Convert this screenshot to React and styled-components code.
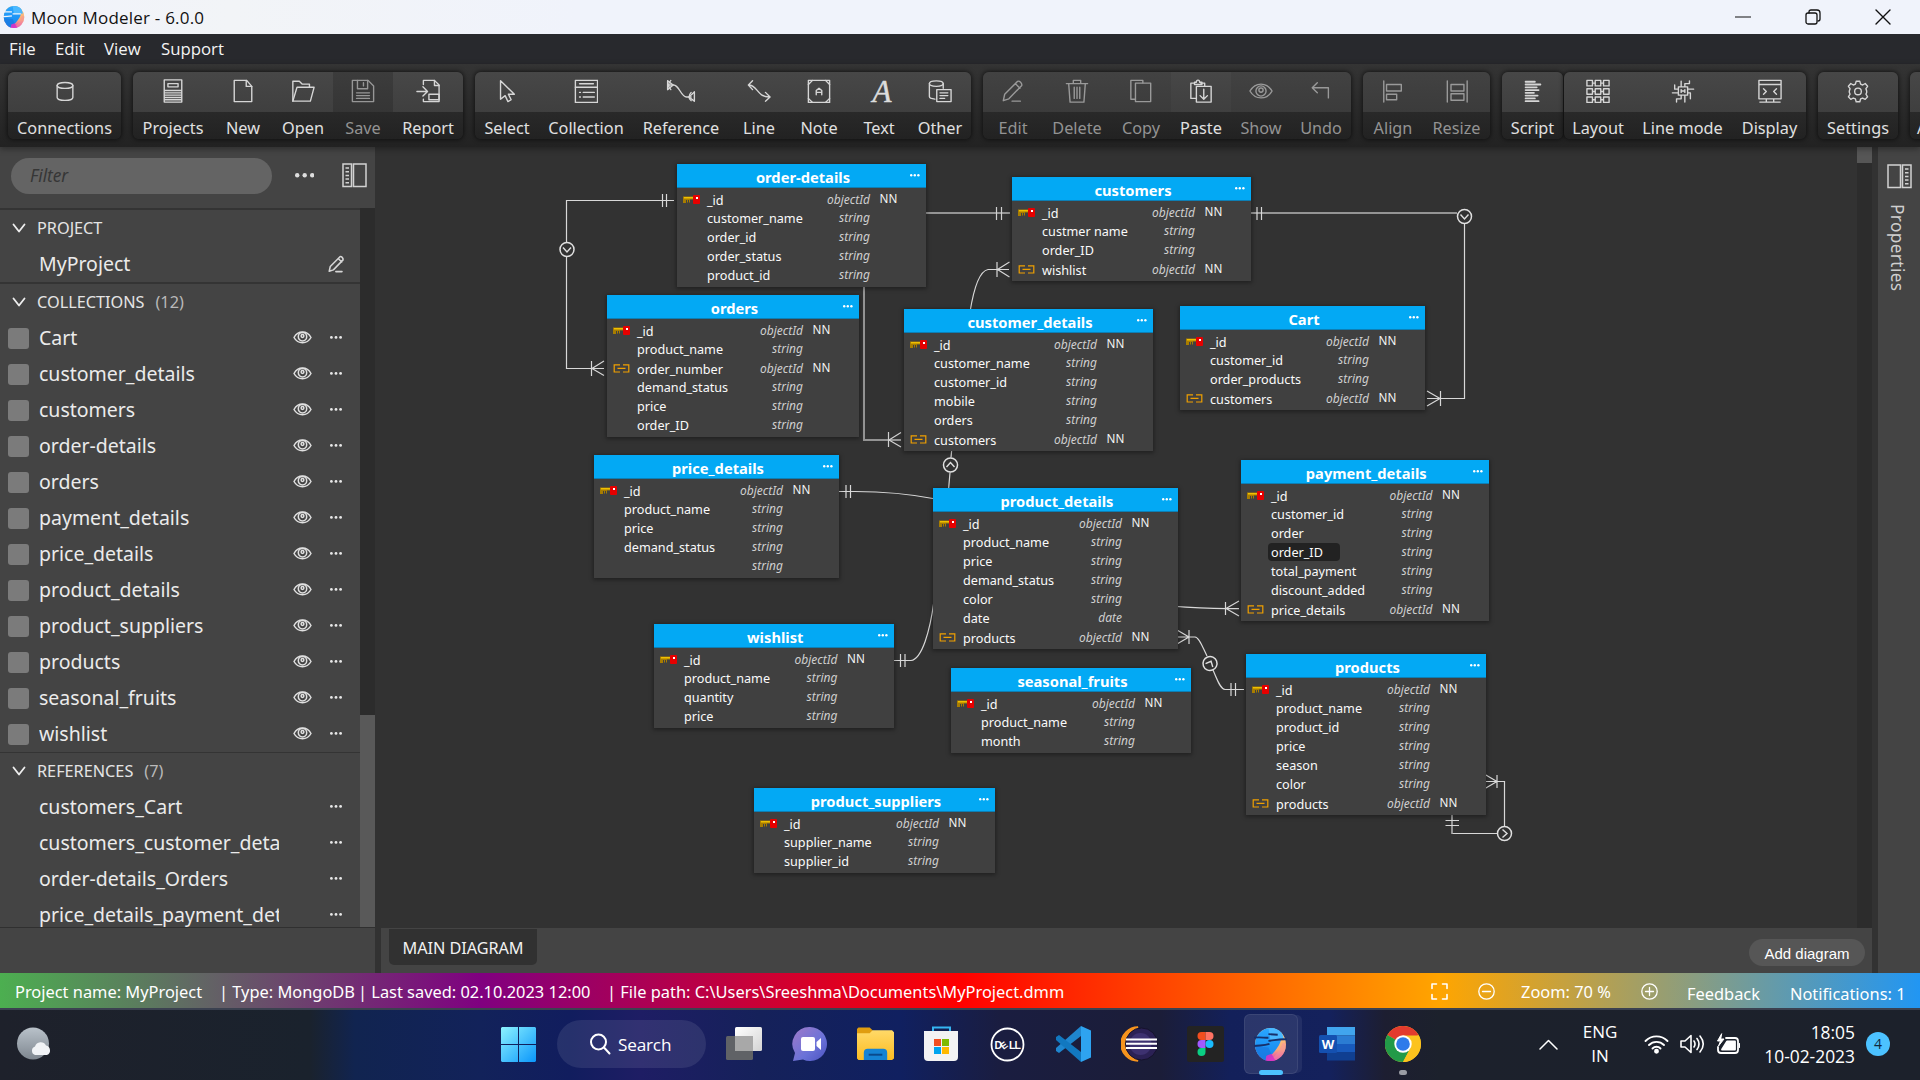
import React from "react";
import styled, { createGlobalStyle } from "styled-components";

const UI = `"Noto Sans", "Open Sans", sans-serif`;
const SYS = `"Open Sans", "Noto Sans", sans-serif`;

const Global = createGlobalStyle`
  * { box-sizing: border-box; }
  html, body { margin: 0; padding: 0; background: #323232; }
  body { overflow: hidden; font-family: ${UI}; font-size: 16.25px; color: #e4e4e4; }
  svg { display: block; flex: none; }
`;

const Screen = styled.div`
  width: 1920px;
  height: 1080px;
  display: flex;
  flex-direction: column;
  overflow: hidden;
`;

/* ---------- window chrome ---------- */

const TitleBar = styled.header`
  height: 34px;
  flex: none;
  display: flex;
  align-items: center;
  padding-left: 3px;
  background: linear-gradient(90deg, #f0f3fb, #f2f4f7 12%, #f0f3fb 30%);
  color: #111;
  font-family: ${SYS};
`;
const WindowTitle = styled.span`
  margin-left: 6px;
  font-size: 17px;
  letter-spacing: 0.2px;
  line-height: 35px;
`;
const WindowButtons = styled.div`
  margin-left: auto;
  display: flex;
  align-items: center;
  gap: 54px;
  padding-right: 29px;
`;

const MenuBar = styled.nav`
  height: 30px;
  flex: none;
  display: flex;
  align-items: center;
  gap: 19px;
  padding: 0 0 1px 9px;
  background: #28292d;
  color: #f4f4f4;
  font-family: ${SYS};
  font-size: 16.8px;
`;
const MenuItem = styled.span`
  width: ${(p) => p.$w}px;
  white-space: nowrap;
`;

/* ---------- toolbar ---------- */

const ToolBar = styled.div`
  height: 83px;
  flex: none;
  display: flex;
  align-items: flex-start;
  gap: 12px;
  padding: 8px 0 0 8px;
  overflow: hidden;
  background: linear-gradient(#343434, #222);
  box-shadow: 0 2px 6px rgba(0, 0, 0, 0.35);
  position: relative;
  z-index: 2;
`;
const ToolGroup = styled.div`
  height: 67px;
  display: flex;
  flex: none;
  border-radius: 6px;
  overflow: hidden;
  box-shadow: 0 0 4px 1px rgba(0, 0, 0, 0.55);
  margin-right: ${(p) => p.$pull || 0}px;
`;
const ToolButton = styled.button`
  width: ${(p) => p.$w}px;
  padding: 0;
  border: 0;
  background: none;
  display: flex;
  flex-direction: column;
  font: 16.25px ${UI};
  color: #dcdcdc;
`;
const ToolFace = styled.span`
  height: 40px;
  width: 100%;
  display: flex;
  align-items: center;
  justify-content: center;
  padding-bottom: 3px;
  background: ${(p) =>
    p.$tone === "dark"
      ? "linear-gradient(#3c3c3c, #353535)"
      : p.$tone === "dim"
      ? "linear-gradient(#424242, #3b3b3b)"
      : "linear-gradient(#474747, #3f3f3f)"};
  svg { opacity: ${(p) => (p.$off ? 0.6 : 1)}; }
`;
const ToolLabel = styled.span`
  height: 27px;
  width: 100%;
  line-height: 22px;
  padding-top: 5px;
  text-align: center;
  white-space: nowrap;
  background: linear-gradient(#292929, #222);
  color: ${(p) => (p.$off ? "#939393" : "#e0e0e0")};
`;

/* ---------- body ---------- */

const Body = styled.main`
  height: 826px;
  flex: none;
  display: flex;
`;
const SideBar = styled.aside`
  width: 375px;
  flex: none;
  display: flex;
  flex-direction: column;
  background: #444;
`;
const FilterBar = styled.div`
  height: 61px;
  flex: none;
  display: flex;
  align-items: center;
  padding: 0 8px 4px 11px;
`;
const FilterField = styled.div`
  width: 261px;
  height: 36px;
  border-radius: 18px;
  background: #646464;
  color: #363636;
  font-style: italic;
  font-size: 17.2px;
  line-height: 36px;
  padding-left: 19px;
  margin-right: 23px;
`;
const Spacer = styled.span`
  flex: 1;
`;
const TreeArea = styled.div`
  height: 720px;
  display: flex;
  overflow: hidden;
  border-bottom: 1px solid #303030;
`;
const Tree = styled.div`
  width: 360px;
  overflow: hidden;
`;
const TreeScroll = styled.div`
  width: 15px;
  background: #2c2c2c;
  padding-top: 507px;
`;
const TreeThumb = styled.div`
  height: 212px;
  background: #595959;
`;
const Section = styled.section`
  border-top: ${(p) => p.$line}px solid #343434;
`;
const SectionHead = styled.div`
  height: 36px;
  display: flex;
  align-items: center;
  padding: 0 0 1px 12px;
  gap: 11px;
  line-height: 36px;
`;
const Count = styled.span`
  color: #b9b9b9;
`;
const TreeRow = styled.div`
  height: 36px;
  display: flex;
  align-items: center;
  padding: 0 18px 0 8px;
`;
const Check = styled.span`
  width: 21px;
  height: 21px;
  border-radius: 3px;
  margin-right: 10px;
  background: ${(p) => (p.$hidden ? "transparent" : "#7b7b7b")};
`;
const RowName = styled.span`
  width: 240px;
  font-size: 19.5px;
  line-height: 36px;
  overflow: hidden;
  white-space: nowrap;
  color: #ebebeb;
`;
const RowTools = styled.span`
  flex: 1;
  display: flex;
  align-items: center;
  justify-content: flex-end;
  gap: 18px;
  padding-bottom: 1px;
  margin-right: ${(p) => p.$shift || 0}px;
`;

const Center = styled.div`
  width: 1497px;
  display: flex;
  flex-direction: column;
  background: #323232;
`;
const CanvasRow = styled.div`
  height: 781px;
  display: flex;
`;
const Canvas = styled.div`
  position: relative;
  width: 1482px;
  background: #323232;
`;
const CanvasScroll = styled.div`
  width: 15px;
  background: #2c2c2c;
`;
const CanvasThumb = styled.div`
  height: 16px;
  background: #565656;
`;
const TabBar = styled.div`
  height: 45px;
  margin-left: 6px;
  padding: 1px 7px 0 8px;
  display: flex;
  align-items: flex-start;
  justify-content: space-between;
  background: #444;
`;
const Tab = styled.div`
  width: 148px;
  height: 36px;
  border-radius: 0 0 5px 5px;
  background: #313131;
  color: #f2f2f2;
  text-align: center;
  line-height: 39px;
  letter-spacing: -0.05px;
`;
const AddButton = styled.button`
  width: 116px;
  height: 27px;
  margin-top: 10px;
  padding: 2px 0 0;
  border: 0;
  border-radius: 14px;
  background: #565656;
  color: #fff;
  font: 15px "Liberation Sans", Arial, sans-serif;
`;
const PropsPanel = styled.aside`
  width: 42px;
  margin-left: 6px;
  background: #444;
  display: flex;
  flex-direction: column;
  align-items: center;
  padding-top: 17px;
`;
const PropsLabel = styled.span`
  writing-mode: vertical-rl;
  margin: 15px 3px 0 0;
  font-size: 17.2px;
  letter-spacing: 0.4px;
  color: #cfcfcf;
`;

/* ---------- diagram ---------- */

const Links = styled.svg`
  position: absolute;
  left: 0;
  top: 0;
`;
const Table = styled.div`
  position: absolute;
  left: ${(p) => p.$x}px;
  top: ${(p) => p.$y}px;
  width: ${(p) => p.$w}px;
  padding-bottom: 3px;
  background: #404040;
  box-shadow: 0 1px 4px 1px rgba(0, 0, 0, 0.35);
`;
const TableHead = styled.div`
  height: 24px;
  margin-bottom: 1px;
  display: grid;
  grid-template-columns: 24px 1fr 21px;
  align-items: center;
  background: #03a9f4;
  border-bottom: 1px solid #0d7fb5;
  color: #fff;
`;
const TableTitle = styled.span`
  font-weight: 700;
  font-size: 14.7px;
  line-height: 20px;
  padding-top: 3px;
  text-align: center;
`;
const TableMenu = styled.span`
  justify-self: end;
  padding-right: 6px;
`;
const Field = styled.div`
  height: 19px;
  display: grid;
  grid-template-columns: 21px 1fr 60px 46px;
  align-items: center;
  padding-left: 6px;
  line-height: 19px;
`;
const FieldName = styled.span`
  font-size: 12.65px;
  width: ${(p) => (p.$on ? "72px" : "auto")};
  height: 18px;
  line-height: 18px;
  padding-left: 3px;
  border-radius: 4px;
  color: #fafafa;
  background: ${(p) => (p.$on ? "#222" : "transparent")};
`;
const FieldType = styled.span`
  font-size: 12px;
  font-style: italic;
  color: #cfcfcf;
  text-align: right;
  padding: 0 10px 1px 0;
`;
const FieldNN = styled.span`
  font-size: 11.7px;
  padding-bottom: 2px;
  margin-left: -0.5px;
  color: #f4f4f4;
`;

/* ---------- status bar ---------- */

const StatusBar = styled.footer`
  height: 35px;
  flex: none;
  display: flex;
  align-items: center;
  padding: 1px 16px 0 15px;
  background: linear-gradient(90deg, #4caf50 0%, purple 25%, red 50%, orange 75%, #2196f3 100%);
  color: #fff;
  font-size: 16.4px;
  white-space: nowrap;
`;
const StatusCell = styled.span`
  width: ${(p) => p.$w}px;
  padding-top: ${(p) => p.$drop || 0}px;
`;

/* ---------- taskbar ---------- */

const TaskBar = styled.footer`
  height: 72px;
  flex: none;
  display: flex;
  align-items: center;
  border-top: 2px solid #3b4150;
  padding-bottom: 2px;
  font-family: ${SYS};
  color: #fff;
  background: linear-gradient(90deg, #1e212b 0, #1a222d 310px, #112450 355px, #12225a 480px, #111d5e 570px,
    #1e1d64 640px, #15215a 760px, #102060 900px, #1a1d40 1000px, #1b1d38 1160px, #13205a 1230px, #14215c 1330px,
    #1d1e31 1385px, #1c212c 1440px, #1c212b 100%);
`;
const Weather = styled.div`
  width: 484px;
  padding-left: 16px;
`;
const Apps = styled.div`
  display: flex;
  align-items: center;
`;
const AppSlot = styled.div`
  width: ${(p) => p.$w || 66}px;
  height: 68px;
  display: flex;
  align-items: center;
  justify-content: center;
  position: relative;
`;
const SearchPill = styled.div`
  width: 149px;
  height: 48px;
  border-radius: 24px;
  margin: 0 3px 0 4px;
  display: flex;
  align-items: center;
  padding-left: 32px;
  gap: 7px;
  background: rgba(255, 255, 255, 0.09);
  font-size: 17.2px;
  letter-spacing: -0.2px;
`;
const ActiveTile = styled.div`
  width: 54px;
  height: 60px;
  border-radius: 6px;
  display: flex;
  align-items: center;
  justify-content: center;
  background: rgba(255, 255, 255, 0.1);
  border: 1px solid rgba(255, 255, 255, 0.08);
  box-shadow: 5px 0 0 -1px #232f66;
`;
const Marker = styled.span`
  position: absolute;
  bottom: 3px;
  left: 50%;
  width: ${(p) => p.$w}px;
  margin-left: ${(p) => -p.$w / 2}px;
  height: 5px;
  border-radius: 3px;
  background: ${(p) => p.$c};
`;
const Tray = styled.div`
  margin-left: auto;
  display: flex;
  align-items: center;
  gap: 11px;
  padding-right: 30px;
  font-size: 17px;
  line-height: 24px;
`;
const Lang = styled.div`
  width: 40px;
  margin: 0 13px 0 11px;
  text-align: center;
`;
const Clock = styled.div`
  width: 98px;
  margin-left: 5px;
  text-align: right;
  font-size: 17.4px;
`;
const Badge = styled.span`
  width: 24px;
  height: 24px;
  border-radius: 50%;
  background: #4cc2ff;
  color: #10283c;
  font-size: 14px;
  text-align: center;
`;

/* ---------- icons ---------- */

const Icon = ({ w = 26, h = 26, box = "0 0 26 26", sw = 1.5, c = "#d6d6d6", children }) => (
  <svg width={w} height={h} viewBox={box} fill="none" stroke={c} strokeWidth={sw} strokeLinejoin="round" strokeLinecap="round">
    {children}
  </svg>
);

const toolIcons = {
  Connections: <><ellipse cx="13" cy="7" rx="8.5" ry="3.2" /><path d="M4.500 7v13c0 1.800 3.800 3.200 8.500 3.200s8.500-1.400 8.500-3.200V7" /></>,
  Projects: <><rect x="3.500" y="1" width="19" height="24" /><rect x="7.500" y="5" width="11" height="3.500" /><path d="M4 12.500h18M4 15h18M4 17.500h18M4 20h18M4 22.500h18" /></>,
  New: <><path d="M3.500 1.500h13.500l5.500 6.500v16.500h-19z" /><path d="M16.500 1.500V8h6" /></>,
  Open: <><path d="M2 24V2.500h7l3 3h8V9" /><path d="M2 24L6.500 9H25l-4 15z" /></>,
  Save: <><path d="M1.500 1.500h17l6 6v17h-23z" /><path d="M7 1.500v9h11v-9M13.500 4v3.500M6 15h14M6 18h14M6 21h14" /></>,
  Report: <><path d="M8 6V1.500h12l5 5v18H8V22" /><path d="M20 1.500v5.500h5M1 13.500h11M7.500 8.500l5 5-5 5M14 16.500h11v6H14z" /></>,
  Select: <path d="M6 2v20l5-4 3 6.500 3.500-2-3-6H21z" />,
  Collection: <><rect x="1.500" y="1.500" width="24" height="24" /><path d="M1.500 9h24M6 5.200h15M6 14.500h1M10 14.500h12M6 19.500h1M10 19.500h12" /></>,
  Reference: <><path d="M-1.500 2v9.500M2 1.500c-3 3-3 7 0 10M-1 6.500h6c6 0 8 13 14 13h5M27.500 14v9.500M24 14.500c-3 3-3 7 0 9" /><path d="M-1.500 2l6 4.500-6 5M27.500 14l-6 5.500 6 4.500" /></>,
  Line: <><path d="M6 2L1.500 6.500 6 11.500M2 6.500c9 0 9 13 22 13M20 14.500l5 5-5 4.500" /></>,
  Note: <><rect x="1.500" y="1.500" width="23" height="24" /><path d="M1.500 6l4.500-4.500M20 1.500L24.500 6M1.500 21l4.500 4.500M20 25.500l4.500-4.500M10 17v-4.500l3-2.500 3 2.500V17M10 14.500h6" /></>,
  Other: <><ellipse cx="9" cy="5" rx="7.500" ry="3" /><path d="M1.500 5v14c0 1.500 2.500 2.500 6 2.800M16.500 5v5" /><path d="M9.500 11.500h15.500v13H9.500zM13 15h8.500M13 18h8.500M13 21h5" /></>,
  Edit: <><path d="M2.500 23.500l1.500-7L18 2.500c2-1 5 2 4.500 4.500L8.500 21.500zM15.500 5l5 5M12 24h9" /></>,
  Delete: <><path d="M1.500 5h23M9 5V1.500h8V5M4 5l1.500 20h15L22 5M10 9v12M13 9v12M16 9v12" /></>,
  Copy: <><path d="M7 22H2V1.500h13V4" /><rect x="7" y="4.500" width="16.500" height="20" /></>,
  Paste: <><path d="M7 21H2V4.500h4M13 4.500h4V8M6 6V3.500h2c0-3 3.500-3 3.500 0H14V6z" /><rect x="8" y="8" width="16" height="17" /><path d="M16 11v10.500M12 18l4 4 4-4" /></>,
  Show: <><path d="M1 13c6-10 18-10 24 0-6 10-18 10-24 0z" /><circle cx="13" cy="13" r="5.500" /><circle cx="13" cy="12" r="2.300" /></>,
  Undo: <path d="M9 4L3.500 9.500 9 15M3.500 9.500H21v11" />,
  Align: <><path d="M3 2v23M6 6h16v7H6zM6 16.500h11v6H6z" /></>,
  Resize: <><path d="M2.500 2v23M24 2v23M6.500 6h14v7h-14zM6.500 16h14v7h-14z" /></>,
  Script: <path strokeWidth="2" d="M5 3h10M5 6h16M5 9h12M5 12h14M5 15h9M5 18h13M5 21h10M5 24h14" />,
  Layout: <><path d="M1 1.500h6v6H1zM10 1.500h6v6h-6zM19 1.500h6v6h-6zM1 10.500h6v6H1zM10 10.500h6v6h-6zM19 10.500h6v6h-6zM1 19.500h6v6H1zM10 19.500h6v6h-6zM19 19.500h6v6h-6zM7 4.500h3M16 4.500h3M7 13.500h3M16 13.500h3M7 22.500h3M16 22.500h3" /></>,
  LineMode: <><path d="M8 8.500h10v9H8zM11 8.500V2.500M15 8.500V5h5V2M8 11H4V6.500M8 15H1.500M18 11h6.500M18 15h3v6.500M11 17.500v4H6v3.500M15 17.500v7.500M11 11.500v3M15 11.500v3M11 13h4" /></>,
  Display: <><path d="M1 1.500h24v20H1zM1 6h24M6 10.500l3 3-3 3M20 10.500l-3 3 3 3M9 21.500V25M17 21.500V25M2 25h22" /></>,
  Settings: <><path d="M11 2.500h4l.8 3 2.300 1 2.700-1.600 2.600 3-1.800 2.600.8 2.500 0 1.500-.8 2 1.800 2.800-2.600 2.800-2.800-1.500-2.200 1-.8 3h-4l-.8-3-2.300-1-2.700 1.500-2.600-2.800 1.800-2.800-.9-2.300.1-1.200.8-2.500-1.800-2.600 2.600-3 2.700 1.600 2.300-1z" /><circle cx="13" cy="13.500" r="3.600" /></>,
};

const Dots = ({ r = 1.4, gap = 4.6, c = "#e8e8e8" }) => {
  const w = gap * 2 + r * 2;
  return (
    <svg width={w} height={r * 2} fill={c}>
      {[0, 1, 2].map((i) => <circle key={i} cx={r + i * gap} cy={r} r={r} />)}
    </svg>
  );
};
const Chevron = () => (
  <Icon w={14} h={10} box="0 0 14 10" sw={1.8} c="#eee"><path d="M1.500 1.500L7 8.500l5.500-7" /></Icon>
);
const Eye = () => (
  <Icon w={19} h={13} box="0 0 19 13" sw={1.5} c="#e0e0e0">
    <path d="M1 6.500C5-.8 14-.8 18 6.500 14 13.500 5 13.500 1 6.500z" />
    <circle cx="9.500" cy="5.800" r="4.200" /><circle cx="9.500" cy="5" r="1.400" />
  </Icon>
);
const PanelIcon = ({ flip }) => (
  <svg width="25" height="25" viewBox="0 0 25 25" fill="none" stroke="#d2d2d2" strokeWidth="1.500" transform={flip ? "scale(-1 1)" : undefined}>
    <path d="M1 1h8.500v22.500H1zM11.500 1H24v22.500H11.500z" />
    <path d="M3.500 5h3.500M3.500 8.700h3.500M3.500 12.400h3.500M3.500 16h3.500M3.500 19.700h3.500" />
  </svg>
);
const KeyIcon = () => (
  <svg width="17" height="10" viewBox="0 0 17 10">
    <path d="M0 1.500h11v3H7V7.500H6V5H5v2.500H4V5H3v3H0z" fill="#a87d00" />
    <path d="M1 2h10v1.500H1z" fill="#f0c000" />
    <rect x="10" y="0" width="7" height="9" rx="1" fill="#e60000" />
    <rect x="13" y="2" width="2" height="2" fill="#fff" />
  </svg>
);
const LinkIcon = () => (
  <svg width="17" height="9" viewBox="0 0 17 9" fill="none" stroke="#f0a000" strokeWidth="1.200">
    <path d="M7 .8H1.200v7.200H7M10 .8h5.800v7.200H10M4.500 4.400h8" />
  </svg>
);

const MoonLogo = ({ s }) => (
  <svg width={s} height={s} viewBox="0 0 32 32">
    <defs>
      <linearGradient id="mlA" x1="0" y1="0" x2="0" y2="1"><stop offset="0" stopColor="#2aa6ff" /><stop offset="1" stopColor="#1286ee" /></linearGradient>
      <linearGradient id="mlB" x1="0" y1="0" x2="0" y2="1"><stop offset="0" stopColor="#ffd27a" /><stop offset=".65" stopColor="#f9a97a" /><stop offset="1" stopColor="#e236b8" /></linearGradient>
      <clipPath id="mlC"><ellipse cx="16" cy="16" rx="15" ry="16" /></clipPath>
    </defs>
    <g clipPath="url(#mlC)">
      <rect width="32" height="32" fill="url(#mlB)" />
      <path d="M0 0h25c4 9 1 17-10 28l-4 4H0z" fill="url(#mlA)" />
      <path d="M14 0h12l3 11-13 1z" fill="#4ab8ff" />
      <path d="M0 17l14 2 4 9-8 4H0z" fill="#1a78e0" opacity=".7" />
      <path d="M15 32c6-5 10-10 13-18l4 2-3 14z" fill="#f58fa0" opacity=".5" />
      <path d="M12 27l5-2 4 7h-10z" fill="#d633c8" opacity=".9" />
    </g>
    {s > 25 ? (
      <path d="M-1 9.500c6-1 10 0 15 0M14 12.500c6-.5 10-2 18-1.500M0 17.500c5-1 9 0 15-2M14 6l9 .5" stroke="#17306b" strokeWidth="1.800" fill="none" />
    ) : (
      <path d="M-1 8.500h14M14 11.500h12M-1 15.500c5-1 9 0 14-1" stroke="#f0f3fb" strokeWidth="1.900" fill="none" />
    )}
  </svg>
);

/* ---------- data ---------- */

const groups = [
  [["Connections", 113]],
  [["Projects", 80], ["New", 60], ["Open", 60], ["Save", 60, "dark", true], ["Report", 70]],
  [["Select", 64], ["Collection", 94], ["Reference", 96], ["Line", 60], ["Note", 60], ["Text", 60], ["Other", 62]],
  [["Edit", 60, "dim", true], ["Delete", 68, "dim", true], ["Copy", 60, "dim", true], ["Paste", 60], ["Show", 60, "dim", true], ["Undo", 60, "dim", true]],
  [["Align", 60, "dim", true], ["Resize", 67, "dim", true]],
  [["Script", 61]],
  [["Layout", 68], ["Line mode", 101], ["Display", 73]],
  [["Settings", 80]],
  [["Account", 76]],
];

const collections = ["Cart", "customer_details", "customers", "order-details", "orders", "payment_details", "price_details",
  "product_details", "product_suppliers", "products", "seasonal_fruits", "wishlist"];
const references = ["customers_Cart", "customers_customer_details", "order-details_Orders", "price_details_payment_details"];

const id = ["_id", "objectId", "key"];
const s = (n) => [n, "string"];
const ref = (n) => [n, "objectId", "link"];
const tables = [
  { t: "order-details", x: 677, y: 164, w: 249, f: [id, s("customer_name"), s("order_id"), s("order_status"), s("product_id")] },
  { t: "customers", x: 1012, y: 177, w: 239, f: [id, s("custmer name"), s("order_ID"), ref("wishlist")] },
  { t: "orders", x: 607, y: 295, w: 252, f: [id, s("product_name"), ref("order_number"), s("demand_status"), s("price"), s("order_ID")], tail: 69 },
  { t: "customer_details", x: 904, y: 309, w: 249, f: [id, s("customer_name"), s("customer_id"), s("mobile"), s("orders"), ref("customers")] },
  { t: "Cart", x: 1180, y: 306, w: 245, f: [id, s("customer_id"), s("order_products"), ref("customers")] },
  { t: "price_details", x: 594, y: 455, w: 245, f: [id, s("product_name"), s("price"), s("demand_status"), s("")] },
  { t: "product_details", x: 933, y: 488, w: 245, f: [id, s("product_name"), s("price"), s("demand_status"), s("color"), ["date", "date"], ref("products")] },
  { t: "payment_details", x: 1241, y: 460, w: 247.500, f: [id, s("customer_id"), s("order"), ["order_ID", "string", null, true], s("total_payment"), s("discount_added"), ref("price_details")] },
  { t: "wishlist", x: 654, y: 624, w: 239.500, f: [id, s("product_name"), s("quantity"), s("price")] },
  { t: "seasonal_fruits", x: 951, y: 668, w: 240, f: [id, s("product_name"), s("month")] },
  { t: "products", x: 1246, y: 654, w: 240, f: [id, s("product_name"), s("product_id"), s("price"), s("season"), s("color"), ref("products")] },
  { t: "product_suppliers", x: 754, y: 788, w: 241, f: [id, s("supplier_name"), s("supplier_id")] },
];

const OX = 375;
const OY = 147;

const linkPaths = [
  "M674 200.500H566.500V242M566.500 257V368.500H604M662.500 194v13M666.500 194v13M591.500 361v15M592 368.500l12-7.500M592 368.500l12 7",
  "M988 269.500H1009M997 262v15M997.500 269.500l12-7.500M997.500 269.500l12 7.500M988 269.500C980 271 974 287 970 312",
  "M951.700 450L951 457.500M950 472.500L948.500 490M934 601C930 631 922 659 911 660.500H893M900.500 654v13M905 654v13",
  "M1257 207v13M1261.500 207v13M1464.500 224V398.500H1427M1440.500 391v15M1440 398.500l-13-7.500M1440 398.500l-13 7.500",
  "M839 491.500H855C885 491.500 910 494 936 499M846 485v13M850.500 485v13M1176 606.500C1195 607.500 1210 608.700 1239 608.700M1225.500 602v13M1226 608.500l13-7.500M1226 608.500l13 7.500",
  "M1177 637H1195C1199 637 1203 648 1207 656M1213 670C1217 679 1220 689 1225 689.500H1244M1189 630v14M1189 637l-12-7M1189 637l-12 7M1231 683v13M1235.500 683v13",
  "M1486 781.500H1504.500V826M1497 833.500H1452.500M1497 775v13M1497 781.500l-12-7M1497 781.500l-12 7M1445.500 820.500h13.500M1445.500 825.500h13.500",
];
const softPaths = ["M926 213H1010", "M1251 213H1457", "M864 287V440H901", "M1452 814V834"];
const softMarks = "M996.500 207v13M1001.500 207v13M888.500 432v15M889 440l12-7.500M889 440l12 7";
const arrows = [[567, 249.500, 0], [950.500, 465, 180], [1464.500, 216.500, 0], [1210, 663.500, 205], [1504.500, 833.500, -90]];

/* ---------- taskbar drawings ---------- */

const StartIcon = () => (
  <svg width="35" height="35" viewBox="0 0 35 35">
    <defs><linearGradient id="st" x1="0" y1="0" x2="1" y2="1"><stop offset="0" stopColor="#8df3ff" /><stop offset="1" stopColor="#0a96fb" /></linearGradient></defs>
    <path d="M1 0h16v17H0V1zM18 0h16l1 1v16H18zM0 18h17v17H1l-1-1zM18 18h17v16l-1 1H18z" fill="url(#st)" />
  </svg>
);
const TaskViewIcon = () => (
  <svg width="36" height="36" viewBox="0 0 36 36">
    <defs><linearGradient id="tv" x1="0" y1="0" x2="1" y2="1"><stop offset="0" stopColor="#fff" /><stop offset="1" stopColor="#d4d4d4" /></linearGradient></defs>
    <rect x="0" y="10" width="27" height="24" rx="1.500" fill="#606266" />
    <rect x="9" y="1" width="27" height="24" rx="1.500" fill="url(#tv)" />
    <rect x="9" y="10" width="18" height="15" fill="#a8a8a8" />
  </svg>
);
const ChatIcon = () => (
  <svg width="36" height="36" viewBox="0 0 36 36">
    <defs><linearGradient id="ch" x1="0" y1="0" x2="1" y2="1"><stop offset="0" stopColor="#a07ac9" /><stop offset=".6" stopColor="#6a72d8" /><stop offset="1" stopColor="#4b52c0" /></linearGradient></defs>
    <path d="M18 1a17 17 0 1 1-7 32.500L1 35l2-8A17 17 0 0 1 18 1z" fill="url(#ch)" />
    <rect x="9" y="11" width="14" height="14" rx="2" fill="#fff" /><path d="M24.500 16l4.500-4v12l-4.500-4z" fill="#fff" />
  </svg>
);
const FolderIcon = () => (
  <svg width="37" height="34" viewBox="0 0 38 34">
    <defs><linearGradient id="fo" x1="0" y1="0" x2="0" y2="1"><stop offset="0" stopColor="#ffd968" /><stop offset="1" stopColor="#fcbc22" /></linearGradient></defs>
    <path d="M1.500 0H13l3 3v8H0V1.500z" fill="#e09d10" />
    <path d="M0 6h13l3-3h20l2 2v27l-2 1.500H1.500L0 32z" fill="url(#fo)" />
    <path d="M7 33.500V26q0-4 4-4h16q4 0 4 4v7.500z" fill="#1583d4" /><rect x="12" y="27" width="14" height="2" fill="#0a4a8c" />
  </svg>
);
const StoreIcon = () => (
  <svg width="36" height="36" viewBox="0 0 36 36">
    <path d="M10 8V1.500h17V8" fill="none" stroke="#35b5f2" strokeWidth="2" />
    <path d="M1 5h34v26q0 4-4 4H5q-4 0-4-4z" fill="#f3f3f4" />
    <path d="M11 13h7v7h-7z" fill="#f25022" /><path d="M19 13h7v7h-7z" fill="#7fba00" /><path d="M11 21h7v7h-7z" fill="#00a4ef" /><path d="M19 21h7v7h-7z" fill="#ffb900" />
  </svg>
);
const DellIcon = () => (
  <svg width="35" height="35" viewBox="0 0 35 35">
    <circle cx="17.500" cy="17.500" r="16" fill="none" stroke="#fff" strokeWidth="1.800" />
    <g fontFamily="Liberation Sans" fontWeight="700" fontSize="10.500" fill="#fff">
      <text x="4.500" y="21.500">D</text>
      <text x="0" y="0" transform="translate(13.500 23) rotate(-38)" fontSize="9.500">E</text>
      <text x="19" y="21.500">L</text>
      <text x="24.500" y="21.500">L</text>
    </g>
  </svg>
);
const CodeIcon = () => (
  <svg width="36" height="36" viewBox="0 0 36 36">
    <path d="M26 0l10 4.500v27L26 36z" fill="#2ea3f0" />
    <path d="M26 0L1 22l0 3 3 2L26 10z" fill="#1f86cf" />
    <path d="M26 36L1 14v-3l3-2 22 17z" fill="#1278c0" />
  </svg>
);
const EclipseIcon = () => (
  <svg width="37" height="36" viewBox="0 0 37 36">
    <path d="M17 1A17 17 0 0 0 17 35 19 19 0 0 1 17 1z" fill="#f7941e" stroke="#f7941e" strokeWidth="1.500" />
    <circle cx="20.500" cy="18" r="16" fill="#2b2155" stroke="#15122c" />
    <circle cx="19.500" cy="18" r="11" fill="#3d3170" />
    <path d="M5 13.500h31M5 17.800h31M5 22h31" stroke="#fff" strokeWidth="2" />
  </svg>
);
const FigmaIcon = () => (
  <svg width="37" height="36" viewBox="0 0 37 36">
    <rect width="37" height="36" rx="2.500" fill="#232323" />
    <path d="M18.500 6h-4a4 4 0 0 0 0 8h4z" fill="#f24e1e" /><path d="M18.500 6h4a4 4 0 0 1 0 8h-4z" fill="#ff7262" />
    <path d="M18.500 14h-4a4 4 0 0 0 0 8h4z" fill="#a259ff" /><circle cx="22.500" cy="18" r="4" fill="#1abcfe" />
    <path d="M18.500 22h-4a4 4 0 1 0 4 4z" fill="#0acf83" />
  </svg>
);
const WordIcon = () => (
  <svg width="36" height="34" viewBox="0 0 36 34">
    <rect x="8" y="0" width="28" height="8.500" fill="#41a5ee" /><rect x="8" y="8.500" width="28" height="8.500" fill="#2b7cd3" />
    <rect x="8" y="17" width="28" height="8" fill="#185abd" /><rect x="8" y="25" width="28" height="8.500" fill="#103f91" />
    <rect x="0" y="8" width="18" height="18" rx="1.500" fill="#1450b0" />
    <text x="9" y="21.500" textAnchor="middle" fontFamily="Open Sans" fontWeight="700" fontSize="13" fill="#fff">W</text>
  </svg>
);
const ChromeIcon = () => (
  <svg width="36" height="36" viewBox="0 0 36 36">
    <circle cx="18" cy="18" r="18" fill="#fcc31e" />
    <path d="M18 18L2.400 9A18 18 0 0 1 33.600 9z" fill="#e33b2e" />
    <path d="M18 18L2.400 9A18 18 0 0 0 18 36l7.500-14z" fill="#229a48" />
    <path d="M18 9.500H33.800A18 18 0 0 1 18 36l7.500-14z" fill="#fcc31e" />
    <circle cx="18" cy="18" r="8.700" fill="#fff" /><circle cx="18" cy="18" r="6.800" fill="#2f7bea" />
  </svg>
);
const WeatherIcon = () => (
  <svg width="36" height="34" viewBox="0 0 36 34">
    <defs><linearGradient id="we" x1="0" y1="0" x2="0" y2="1"><stop offset="0" stopColor="#b9c2ca" /><stop offset="1" stopColor="#7f8790" /></linearGradient></defs>
    <circle cx="17" cy="16.500" r="16" fill="url(#we)" />
    <path d="M19 28a4.500 4.500 0 0 1 0-8.500 6 6 0 0 1 11-1 5 5 0 0 1 1 9.500z" fill="#f1f3f6" />
  </svg>
);

/* ---------- views ---------- */

const Tool = ({ name, w, tone, off }) => (
  <ToolButton $w={w}>
    <ToolFace $tone={tone} $off={off}>
      {name === "Text" ? (
        <svg width="34" height="34" viewBox="0 0 34 34"><text x="20" y="28" textAnchor="middle" fontFamily="Liberation Serif" fontStyle="italic" fontSize="31" fill="#dcdcdc" stroke="#dcdcdc" strokeWidth="0.500">A</text></svg>
      ) : (
        <Icon w={name === "Reference" ? 32 : 24} h={24} box={name === "Reference" ? "-4 0 34 26" : "0 0 26 26"}>{toolIcons[name.replace(" m", "M")]}</Icon>
      )}
    </ToolFace>
    <ToolLabel $off={off}>{name}</ToolLabel>
  </ToolButton>
);

const Entity = ({ t, x, y, w, f, tail }) => (
  <Table $x={x - OX} $y={y - OY} $w={w}>
    <TableHead>
      <span />
      <TableTitle>{t}</TableTitle>
      <TableMenu><Dots r={1.2} gap={3.6} c="#fff" /></TableMenu>
    </TableHead>
    {f.map(([n, type, icon, on], i) => (
      <Field key={i}>
        {icon === "key" ? <KeyIcon /> : icon === "link" ? <LinkIcon /> : <span />}
        <FieldName $on={on}>{n}</FieldName>
        <FieldType>{type}</FieldType>
        <FieldNN>{icon ? "NN" : ""}</FieldNN>
      </Field>
    ))}
  </Table>
);

export default function App() {
  return (
    <Screen>
      <Global />
      <TitleBar>
        <MoonLogo s={22} />
        <WindowTitle>Moon Modeler - 6.0.0</WindowTitle>
        <WindowButtons>
          <Icon w={16} h={16} box="0 0 16 16" sw={1.2} c="#111"><path d="M.5 8h15" /></Icon>
          <Icon w={16} h={16} box="0 0 16 16" sw={1.3} c="#111"><rect x="1" y="4" width="11" height="11" rx="2" /><path d="M4 4V3q0-2 2-2h6q3 0 3 3v6q0 2-2 2" /></Icon>
          <Icon w={16} h={16} box="0 0 16 16" sw={1.4} c="#111"><path d="M1 1l14 14M15 1L1 15" /></Icon>
        </WindowButtons>
      </TitleBar>
      <MenuBar>
        <MenuItem $w={27}>File</MenuItem>
        <MenuItem $w={30}>Edit</MenuItem>
        <MenuItem $w={38}>View</MenuItem>
        <MenuItem $w={64}>Support</MenuItem>
      </MenuBar>
      <ToolBar>
        {groups.map((g, i) => (
          <ToolGroup key={i} $pull={i === 5 ? -11 : 0}>
            {g.map(([n, w, tone, off]) => <Tool key={n} name={n} w={w} tone={tone} off={off} />)}
          </ToolGroup>
        ))}
      </ToolBar>

      <Body>
        <SideBar>
          <FilterBar>
            <FilterField>Filter</FilterField>
            <Dots r={2.2} gap={7.5} c="#dedede" />
            <Spacer />
            <PanelIcon />
          </FilterBar>
          <TreeArea>
            <Tree>
              <Section $line={2}>
                <SectionHead><Chevron />PROJECT</SectionHead>
                <TreeRow>
                  <Check $hidden />
                  <RowName>MyProject</RowName>
                  <RowTools $shift={-4}><Icon w={19} h={18} box="0 0 26 26" sw={2.2}>{toolIcons.Edit}</Icon></RowTools>
                </TreeRow>
              </Section>
              <Section $line={2}>
                <SectionHead><Chevron />COLLECTIONS <Count>(12)</Count></SectionHead>
                {collections.map((c) => (
                  <TreeRow key={c}>
                    <Check />
                    <RowName>{c}</RowName>
                    <RowTools><Eye /><Dots /></RowTools>
                  </TreeRow>
                ))}
              </Section>
              <Section $line={1}>
                <SectionHead><Chevron />REFERENCES <Count>(7)</Count></SectionHead>
                {references.map((c) => (
                  <TreeRow key={c}>
                    <Check $hidden />
                    <RowName>{c}</RowName>
                    <RowTools><Dots /></RowTools>
                  </TreeRow>
                ))}
              </Section>
            </Tree>
            <TreeScroll><TreeThumb /></TreeScroll>
          </TreeArea>
        </SideBar>

        <Center>
          <CanvasRow>
            <Canvas>
              <Links width="1482" height="781" viewBox={`${OX} ${OY} 1482 781`} fill="none">
                {softPaths.map((d) => <path key={d} d={d} stroke="#949494" strokeWidth="2" />)}
                <path d={softMarks} stroke="#d0d0d0" strokeWidth="1.200" />
                {linkPaths.map((d) => <path key={d} d={d} stroke="#d8d8d8" strokeWidth="1.200" />)}
                {arrows.map(([x, y, a]) => (
                  <g key={x} transform={`translate(${x} ${y}) rotate(${a})`} stroke="#e0e0e0">
                    <circle r="7" strokeWidth="1.500" fill="#323232" />
                    <path d="M-4 -2L0 2.500 4 -2" strokeWidth="1.400" />
                  </g>
                ))}
              </Links>
              {tables.map((t) => <Entity key={t.t} {...t} />)}
            </Canvas>
            <CanvasScroll><CanvasThumb /></CanvasScroll>
          </CanvasRow>
          <TabBar>
            <Tab>MAIN DIAGRAM</Tab>
            <AddButton>Add diagram</AddButton>
          </TabBar>
        </Center>
        <PropsPanel>
          <PanelIcon flip />
          <PropsLabel>Properties</PropsLabel>
        </PropsPanel>
      </Body>

      <StatusBar>
        <StatusCell $w={204}>Project name: MyProject</StatusCell>
        <StatusCell $w={139}>| Type: MongoDB</StatusCell>
        <StatusCell $w={249}>| Last saved: 02.10.2023 12:00</StatusCell>
        <StatusCell>| File path: C:\Users\Sreeshma\Documents\MyProject.dmm</StatusCell>
        <Spacer />
        <StatusCell $w={47}><Icon w={17} h={17} box="0 0 17 17" sw={1.6} c="#fff"><path d="M1 5.500V1h4.500M11.500 1H16v4.500M16 11.500V16h-4.500M5.500 16H1v-4.500" /></Icon></StatusCell>
        <StatusCell $w={43}><Icon w={17} h={17} box="0 0 17 17" sw={1.3} c="#fff"><circle cx="8.500" cy="8.500" r="7.700" /><path d="M4.500 8.500h8" /></Icon></StatusCell>
        <StatusCell $w={120}>Zoom: 70 %</StatusCell>
        <StatusCell $w={46}><Icon w={17} h={17} box="0 0 17 17" sw={1.3} c="#fff"><circle cx="8.500" cy="8.500" r="7.700" /><path d="M4.500 8.500h8M8.500 4.500v8" /></Icon></StatusCell>
        <StatusCell $w={103} $drop={4}>Feedback</StatusCell>
        <StatusCell $w={114} $drop={4}>Notifications: 1</StatusCell>
      </StatusBar>

      <TaskBar>
        <Weather><WeatherIcon /></Weather>
        <Apps>
          <AppSlot $w={69}><StartIcon /></AppSlot>
          <SearchPill>
            <Icon w={22} h={22} box="0 0 22 22" sw={2} c="#fff"><circle cx="9.500" cy="9" r="7.500" /><path d="M15 14.500l5.500 6" /></Icon>
            Search
          </SearchPill>
          <AppSlot $w={69}><TaskViewIcon /></AppSlot>
          <AppSlot $w={64}><ChatIcon /></AppSlot>
          <AppSlot><FolderIcon /></AppSlot>
          <AppSlot><StoreIcon /></AppSlot>
          <AppSlot><DellIcon /></AppSlot>
          <AppSlot><CodeIcon /></AppSlot>
          <AppSlot><EclipseIcon /></AppSlot>
          <AppSlot><FigmaIcon /></AppSlot>
          <AppSlot $w={65}><ActiveTile><MoonLogo s={33} /></ActiveTile><Marker $w={24} $c="#4cc2ff" /></AppSlot>
          <AppSlot $w={67}><WordIcon /></AppSlot>
          <AppSlot><ChromeIcon /><Marker $w={8} $c="#9a9ca4" /></AppSlot>
        </Apps>
        <Tray>
          <Icon w={19} h={11} box="0 0 19 11" sw={1.5} c="#fff"><path d="M1 10l8.500-8.500L18 10" /></Icon>
          <Lang>ENG<br />IN</Lang>
          <Icon w={25} h={20} box="0 0 25 20" sw={1.9} c="#fff"><path d="M1.500 7a15.500 15.500 0 0 1 22 0M5 11a10.600 10.600 0 0 1 15 0M8.500 14.500a5.600 5.600 0 0 1 8 0" /><circle cx="12.500" cy="17.300" r="1.500" fill="#fff" /></Icon>
          <Icon w={25} h={20} box="0 0 25 20" sw={1.6} c="#fff"><path d="M1 7h4l6-5.500v17L5 13H1zM14 7q2 3 0 6M17 4.500q4 5.500 0 11M20 2q6.500 8 0 16" /></Icon>
          <Icon w={25} h={22} box="0 0 25 22" sw={1.8} c="#fff"><path d="M10 5h9q3 0 3 3v9q0 3-3 3H5q-3 0-3-3v-3" /><path d="M11 8.500h8v8H6z" fill="#fff" /><path d="M23.500 10.500v4M5.500 1L1.500 8h3L2.500 13 8 6H5z" fill="#fff" strokeWidth="1" /></Icon>
          <Clock>18:05<br />10-02-2023</Clock>
          <Badge>4</Badge>
        </Tray>
      </TaskBar>
    </Screen>
  );
}
